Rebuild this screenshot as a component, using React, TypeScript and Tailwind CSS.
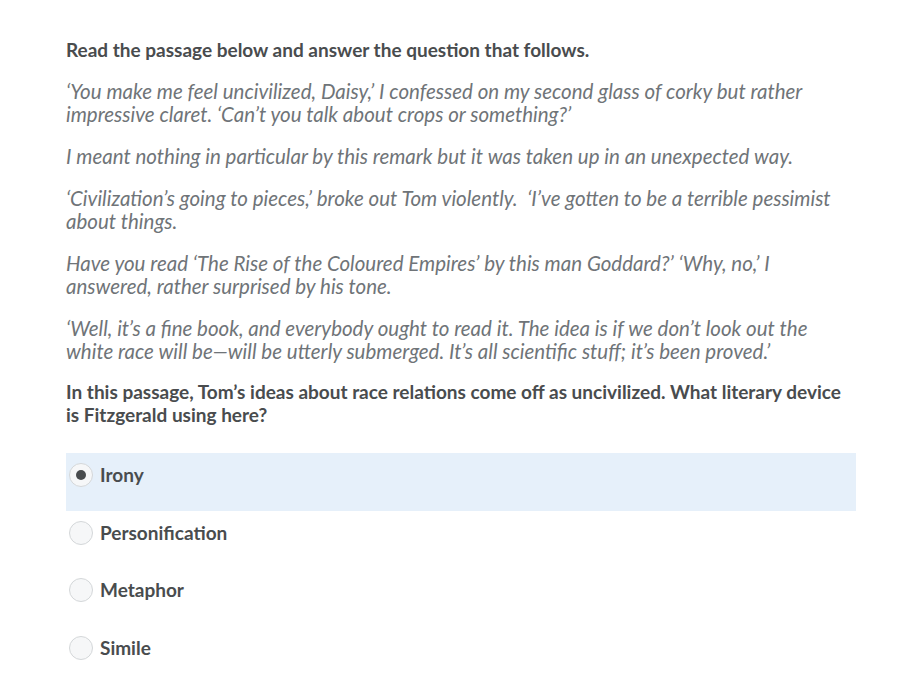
const options = ["Irony", "Personification", "Metaphor", "Simile"];

const passage = [
  "‘You make me feel uncivilized, Daisy,’ I confessed on my second glass of corky but rather impressive claret. ‘Can’t you talk about crops or something?’",
  "I meant nothing in particular by this remark but it was taken up in an unexpected way.",
  "‘Civilization’s going to pieces,’ broke out Tom violently.  ‘I’ve gotten to be a terrible pessimist about things.",
  "Have you read ‘The Rise of the Coloured Empires’ by this man Goddard?’ ‘Why, no,’ I answered, rather surprised by his tone.",
  "‘Well, it’s a fine book, and everybody ought to read it. The idea is if we don’t look out the white race will be—will be utterly submerged. It’s all scientific stuff; it’s been proved.’",
];

export default function App() {
  const selected = "Irony";
  return (
    <div className="min-h-[677px] bg-white font-['Lato',sans-serif] text-[#494c4e]">
      <div className="w-[790px] pl-[66px] box-content pt-[38px]">
        <p className="text-[19px] font-bold leading-[23px]">
          Read the passage below and answer the question that follows.
        </p>
        {passage.map((para) => (
          <p
            key={para.slice(0, 20)}
            className="mt-[19px] whitespace-pre-wrap text-[20.5px] italic leading-[23px] text-[#6f7478]"
          >
            {para}
          </p>
        ))}
        <p className="mt-[17px] text-[19px] font-bold leading-[23px]">
          In this passage, Tom’s ideas about race relations come off as uncivilized. What literary
          device is Fitzgerald using here?
        </p>
        <div className="mt-[27px] flex flex-col">
          {options.map((opt) => {
            const isOn = opt === selected;
            return (
              <label
                key={opt}
                className={`flex h-[57.5px] items-start gap-[7px] pl-[3px] pt-[10px] ${
                  isOn ? "bg-[#e6f0fa]" : ""
                }`}
              >
                <span className="flex h-[24px] w-[24px] items-center justify-center rounded-full border border-[#d4d7d9] bg-[#f6f7f8]">
                  {isOn ? <span className="h-[10px] w-[10px] rounded-full bg-[#494c4e]" /> : null}
                </span>
                <span className="text-[19px] font-bold leading-[24px]">{opt}</span>
              </label>
            );
          })}
        </div>
      </div>
    </div>
  );
}
